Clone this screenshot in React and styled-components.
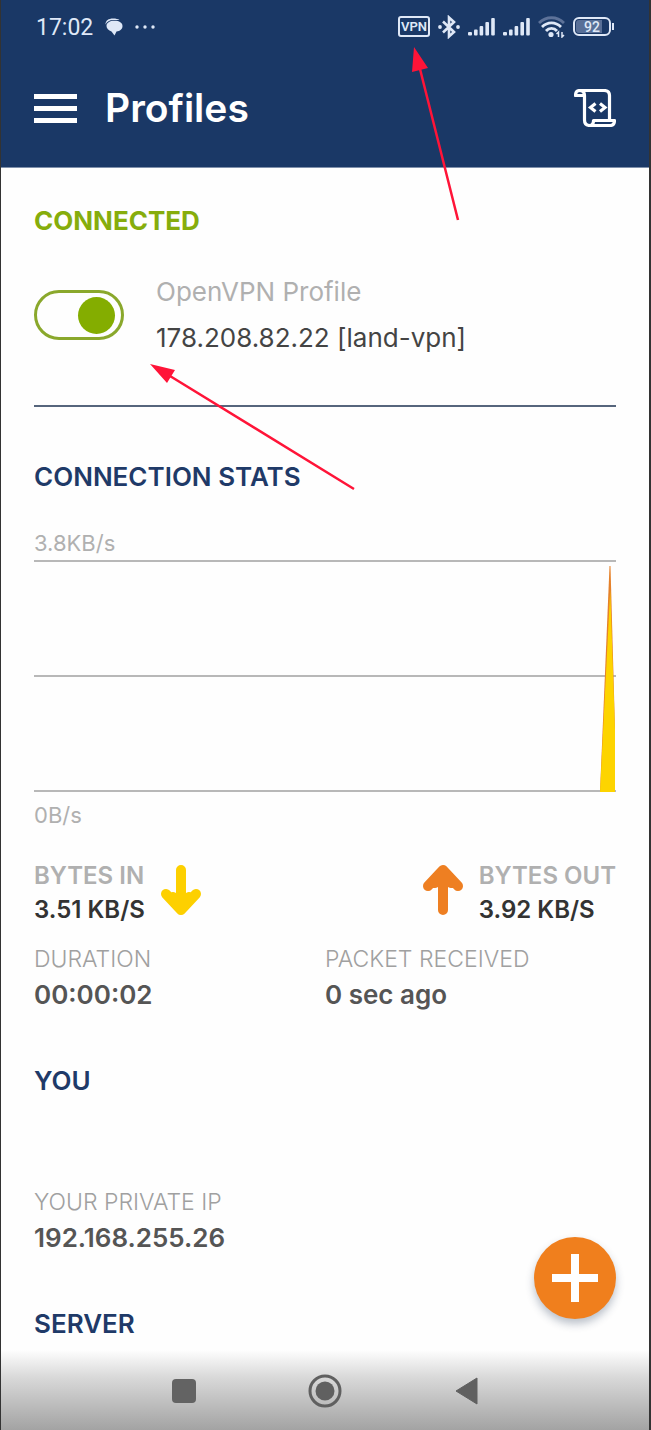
import React from "react";
import styled, { createGlobalStyle } from "styled-components";

const GlobalStyle = createGlobalStyle`
  * { box-sizing: border-box; }
  body { margin: 0; background: #fefefe; font-family: Inter, "Liberation Sans", sans-serif; }
  h1, h2, p, dl, dt, dd { margin: 0; }
  svg { display: block; }
`;

const Screen = styled.div`
  position: relative;
  display: flex;
  flex-direction: column;
  min-height: 100vh;
  background: #fefefe;
  border-left: 1px solid #333;
  border-right: 2px solid #333;
`;

const Header = styled.header`
  background: #1a3866;
  color: #fff;
  border-bottom: 1px solid #7f90ab;
`;

const StatusBar = styled.div`
  display: flex;
  align-items: center;
  justify-content: space-between;
  height: 53px;
  padding: 0 35px;
  color: #dfe8f7;
  font-family: Roboto, sans-serif;
`;

const StatusGroup = styled.div`
  display: flex;
  align-items: center;
  gap: ${(p) => p.$gap}px;
`;

const Clock = styled.span`
  padding-top: 3px;
  font-size: 23px;
  line-height: 28px;
`;

const VpnBadge = styled.span`
  width: 32px;
  height: 21px;
  border: 2px solid currentColor;
  border-radius: 3px;
  font-size: 13px;
  font-weight: 600;
  line-height: 18px;
  text-align: center;
`;

const Battery = styled.span`
  display: flex;
  align-items: center;
`;

const BatteryBody = styled.span`
  width: 38px;
  height: 19px;
  padding: 1px;
  border: 2px solid currentColor;
  border-radius: 6px;
  background: linear-gradient(90deg, #586f97 80%, #1a3866 80%);
  background-clip: content-box;
  font-size: 14px;
  font-weight: 500;
  line-height: 14px;
  text-align: center;
`;

const BatteryTip = styled.span`
  width: 2px;
  height: 7px;
  margin-left: 1px;
  background: currentColor;
`;

const AppBar = styled.div`
  display: flex;
  align-items: center;
  height: 114px;
  padding: 0 33px 4px;
`;

const IconButton = styled.button`
  padding: 0;
  border: 0;
  background: none;
  color: inherit;
`;

const Title = styled.h1`
  flex: 1;
  margin-left: 28px;
  font-size: 39px;
  font-weight: 600;
  line-height: 48px;
`;

const Main = styled.main`
  flex: 1;
  padding: 37px 33px 10px;
`;

const Heading = styled.h2`
  font-size: 26px;
  line-height: 32px;
  font-weight: ${(p) => (p.$active ? 700 : 600)};
  color: ${(p) => (p.$active ? "#86ad0c" : "#1f3a68")};
`;

const ProfileRow = styled.div`
  display: flex;
  align-items: center;
  gap: 32px;
  margin-top: 32px;
  padding-bottom: 44px;
  border-bottom: 2px solid #56657c;
`;

const Switch = styled.input`
  appearance: none;
  display: flex;
  align-items: center;
  justify-content: flex-end;
  flex: none;
  width: 90px;
  height: 50px;
  margin: 0;
  padding: 0 6px;
  border: 3px solid #8aa82c;
  border-radius: 25px;

  &::before {
    content: "";
    width: 37px;
    height: 37px;
    border-radius: 50%;
    background: #84ad00;
  }

  &:not(:checked) { justify-content: flex-start; }
`;

const ProfileText = styled.label`
  display: flex;
  flex-direction: column;
  font-size: 26px;
  line-height: 46px;
  color: #444;
`;

const Muted = styled.span`
  color: #b0b0b0;
`;

const Stats = styled.section`
  margin-top: 54px;
`;

const AxisLabel = styled.p`
  font-size: 22px;
  line-height: 24px;
  color: #b0b0b0;
`;

const Graph = styled.figure`
  margin: 38px 0 0;

  svg { margin: 5px 0 11px; }
`;

const Rates = styled.div`
  display: flex;
  justify-content: space-between;
  margin-top: 32px;
`;

const Rate = styled.div`
  display: flex;
  align-items: flex-start;
  gap: 16px;

  svg { margin-top: 6px; }
`;

const RateText = styled.dl`
  font-size: 24px;
  line-height: 34px;
  font-weight: 600;
  color: #333;

  dt { color: #b0b0b0; }
`;

const Facts = styled.dl`
  display: grid;
  grid-template-columns: 1fr 1fr;
  margin-top: ${(p) => p.$top}px;
  line-height: 36px;

  dt { font-size: 23px; font-weight: 300; color: #a0a0a0; }
  dd { font-size: 26px; font-weight: 600; color: #555; }
`;

const Block = styled.section`
  margin-top: 52px;
`;

const AddButton = styled.button`
  position: absolute;
  right: 33px;
  bottom: 111px;
  display: grid;
  place-items: center;
  width: 82px;
  height: 82px;
  padding: 0;
  border: 0;
  border-radius: 50%;
  background: #f07f1d;
  box-shadow: 0 5px 9px rgba(30, 50, 80, 0.3);
`;

const SystemNav = styled.nav`
  display: flex;
  justify-content: center;
  height: 80px;
  background: linear-gradient(#fefefe, #d8d8d8 35%, #a3a3a3);
`;

const NavButton = styled.button`
  display: grid;
  place-items: center;
  width: 141px;
  padding: 2px 0 0;
  border: 0;
  background: none;
`;

const Annotations = styled.svg`
  position: absolute;
  top: 0;
  left: 0;
  pointer-events: none;
`;

const Chat = () => (
  <svg width="18" height="18" viewBox="0 0 18 18" fill="currentColor" aria-hidden="true">
    <path d="M.5 6.500C.5 2.500 3.500.5 8 .5c3 0 5 .5 6.500 1.500H8C4.500 2 2 3.500.5 6.500Z" />
    <path d="M9.500 2.800c4.800 0 8 2 8 5.200 0 3.200-2.500 5-6 5.500L9.500 17.500 6.500 13.500C3.500 12.500 1.500 10.500 1.500 8c0-3.200 3.200-5.200 8-5.200Z" />
  </svg>
);

const Dots = () => (
  <svg width="20" height="4" viewBox="0 0 20 4" fill="currentColor" aria-hidden="true">
    <circle cx="2" cy="2" r="1.700" />
    <circle cx="10" cy="2" r="1.700" />
    <circle cx="18" cy="2" r="1.700" />
  </svg>
);

const Bluetooth = () => (
  <svg width="22" height="24" viewBox="0 0 22 24" fill="none" stroke="currentColor" strokeWidth="2.600" aria-hidden="true">
    <path d="M5 6.500 16 17l-5 4.500v-19L16 7 5 17.500" />
    <circle cx="2" cy="12" r="1.900" fill="currentColor" stroke="none" />
    <circle cx="20" cy="12" r="1.900" fill="currentColor" stroke="none" />
  </svg>
);

const Signal = () => (
  <svg width="27" height="18" viewBox="0 0 27 18" fill="currentColor" aria-hidden="true">
    <rect x="0" y="14" width="4" height="3.500" rx="1" />
    <rect x="6" y="11.500" width="3.600" height="6" rx="1" />
    <rect x="11.600" y="8" width="3.600" height="9.500" rx="1" />
    <rect x="17.400" y="4" width="3.600" height="13.500" rx="1" />
    <rect x="23.200" y="0" width="3.600" height="17.500" rx="1" />
  </svg>
);

const Wifi = () => (
  <svg width="27" height="22" viewBox="0 0 27 22" fill="none" stroke="currentColor" strokeWidth="2.800" aria-hidden="true">
    <path d="M1 7c7-7 18-7 25 0" stroke="#5d7299" />
    <path d="M4 11c5.500-5.500 13.500-5.500 19 0" />
    <path d="M8 15c3-3.500 8-3.500 11 0" />
    <circle cx="13" cy="18.500" r="2.600" fill="currentColor" stroke="none" />
    <path d="M20.500 21v-5l-2 2M24 16v5l2-2" strokeWidth="1.500" />
  </svg>
);

const Menu = () => (
  <svg width="43" height="29" viewBox="0 0 43 29" fill="currentColor" aria-hidden="true">
    <path d="M0 0h43v5H0zM0 12h43v5H0zM0 24h43v5H0z" />
  </svg>
);

const Script = () => (
  <svg width="42" height="38" viewBox="0 0 42 38" fill="none" stroke="currentColor" strokeWidth="3.200" strokeLinejoin="round" aria-hidden="true">
    <path d="M10.500 6.500h-9c0-3 1.500-5 4.500-5h24c3.500 0 5.500 2 5.500 5V31" />
    <path d="M5 1.500c3.500 0 5.500 2 5.500 5V31c0 3.500 2 5.500 5.500 5.500h20c3 0 4.500-2 4.500-5H19.500c0 3-1.200 5-4 5" />
    <path d="m21.500 14.500-5 4 5 4M26 14.500l5 4-5 4" strokeLinejoin="miter" />
  </svg>
);

const FlowArrow = ({ color, up }) => (
  <svg width="40" height="50" viewBox="0 0 40 50" fill="none" stroke={color} strokeWidth="10" strokeLinecap="round" strokeLinejoin="round" aria-hidden="true">
    {up ? <path d="M20 45V8M5 21 20 5l15 16M12 18 20 9l8 9" /> : <path d="M20 5v37M5 29l15 16 15-16M12 32l8 9 8-9" />}
  </svg>
);

const Chart = () => (
  <svg width="100%" height="232" role="img" aria-label="Throughput graph">
    <g stroke="#b8b8b8" strokeWidth="2">
      <line x1="0" x2="100%" y1="1" y2="1" />
      <line x1="0" x2="100%" y1="116" y2="116" />
      <line x1="0" x2="100%" y1="231" y2="231" />
    </g>
    <svg x="100%" overflow="visible">
      <path d="M-16 232-6.500 6h1L-1 170v62z" fill="#e5812a" />
      <path d="M-16 232-5.800 30l4.800 140v62z" fill="#fdd400" />
    </svg>
  </svg>
);

export default function App() {
  return (
    <>
      <GlobalStyle />
      <Screen>
        <Header>
          <StatusBar>
            <StatusGroup $gap={12}>
              <Clock>17:02</Clock>
              <Chat />
              <Dots />
            </StatusGroup>
            <StatusGroup $gap={8}>
              <VpnBadge>VPN</VpnBadge>
              <Bluetooth />
              <Signal />
              <Signal />
              <Wifi />
              <Battery>
                <BatteryBody>92</BatteryBody>
                <BatteryTip />
              </Battery>
            </StatusGroup>
          </StatusBar>
          <AppBar>
            <IconButton type="button" aria-label="Menu"><Menu /></IconButton>
            <Title>Profiles</Title>
            <IconButton type="button" aria-label="Log"><Script /></IconButton>
          </AppBar>
        </Header>

        <Main>
          <Heading $active>CONNECTED</Heading>
          <ProfileRow>
            <Switch type="checkbox" role="switch" id="profile" defaultChecked />
            <ProfileText htmlFor="profile">
              <Muted>OpenVPN Profile</Muted>
              <span>178.208.82.22 [land-vpn]</span>
            </ProfileText>
          </ProfileRow>

          <Stats>
            <Heading>CONNECTION STATS</Heading>
            <Graph>
              <AxisLabel>3.8KB/s</AxisLabel>
              <Chart />
              <AxisLabel>0B/s</AxisLabel>
            </Graph>
            <Rates>
              <Rate>
                <RateText>
                  <dt>BYTES IN</dt>
                  <dd>3.51 KB/S</dd>
                </RateText>
                <FlowArrow color="#fdd000" />
              </Rate>
              <Rate>
                <FlowArrow color="#ee7f22" up />
                <RateText>
                  <dt>BYTES OUT</dt>
                  <dd>3.92 KB/S</dd>
                </RateText>
              </Rate>
            </Rates>
            <Facts $top={14}>
              <div>
                <dt>DURATION</dt>
                <dd>00:00:02</dd>
              </div>
              <div>
                <dt>PACKET RECEIVED</dt>
                <dd>0 sec ago</dd>
              </div>
            </Facts>
          </Stats>

          <Block>
            <Heading>YOU</Heading>
            <Facts $top={87}>
              <div>
                <dt>YOUR PRIVATE IP</dt>
                <dd>192.168.255.26</dd>
              </div>
            </Facts>
          </Block>

          <Block>
            <Heading>SERVER</Heading>
          </Block>
        </Main>

        <SystemNav aria-label="System">
          <NavButton type="button" aria-label="Recent apps">
            <svg width="24" height="24"><rect width="24" height="24" rx="4" fill="#636363" /></svg>
          </NavButton>
          <NavButton type="button" aria-label="Home">
            <svg width="34" height="34" fill="none" stroke="#606060">
              <circle cx="17" cy="17" r="15" strokeWidth="3" />
              <circle cx="17" cy="17" r="9.500" fill="#606060" stroke="none" />
            </svg>
          </NavButton>
          <NavButton type="button" aria-label="Back">
            <svg width="23" height="28"><path d="M22 1v26L1 14z" fill="#606060" stroke="#606060" strokeLinejoin="round" /></svg>
          </NavButton>
        </SystemNav>

        <AddButton type="button" aria-label="Add profile">
          <svg width="46" height="48" fill="#fff" aria-hidden="true">
            <path d="M19 0h8v20h19v8H27v20h-8V28H0v-8h19z" />
          </svg>
        </AddButton>

        <Annotations width="480" height="500" stroke="#ff1438" fill="#ff1438" aria-hidden="true">
          <path d="M457 220 419 69M353 489 169 376" strokeWidth="2.500" />
          <path d="m413 47-2 25 16-4zM149 364l25 6-8 13z" stroke="none" />
        </Annotations>
      </Screen>
    </>
  );
}
